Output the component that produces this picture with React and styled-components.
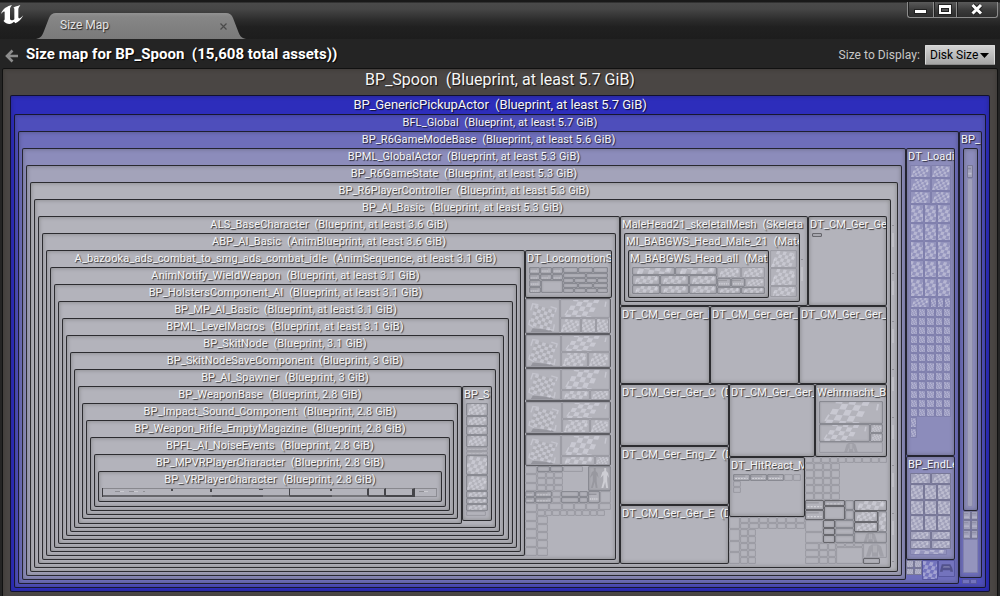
import React from "react";
import styled, { createGlobalStyle, css } from "styled-components";

const GlobalStyle = createGlobalStyle`
  *, *::before, *::after { box-sizing: border-box; }
  html, body { margin: 0; padding: 0; overflow: hidden; background: #242424; }
  body { font-family: Roboto, "Liberation Sans", sans-serif; color: #f0f0f0; }
`;

const tones = {
  root: "#4a4644",
  blue1: "#2d2dbb",
  blue2: "#4e4ebb",
  blue3: "#6e6ebb",
  blue4: "#8c8cbb",
  blue5: "#a3a3ba",
  grey: "#b3b3bb",
};

/* ---------- window chrome ---------- */

const Window = styled.div`
  width: 1000px;
  height: 596px;
  overflow: hidden;
  display: flex;
  flex-direction: column;
  background: #242424;
`;

const TitleBar = styled.header`
  flex: none;
  height: 39px;
  display: flex;
  align-items: flex-start;
  background: linear-gradient(#191919 0, #191919 2px, #4a4a4a 3px, #464646 9px, #2c2c2c 20px, #202020 27px, #1d1d1d 39px);
`;

const Logo = styled.svg`
  flex: none;
  width: 24px;
  height: 26px;
  fill: #fff;
`;

const Tab = styled.div`
  position: relative;
  width: 211px;
  height: 26px;
  margin: 13px 0 0 12px;
  padding: 0 20px 0 24px;
  display: flex;
  align-items: center;
  justify-content: space-between;
  font-size: 12px;
  line-height: 24px;
  color: #e4e4e4;
  text-shadow: 1px 1px 1px #222;
`;

const TabShape = styled.svg`
  position: absolute;
  inset: 0;
  width: 211px;
  height: 26px;
`;

const TabText = styled.span`
  position: relative;
  top: -1px;
`;

const TabClose = styled.svg`
  position: relative;
  width: 7px;
  height: 7px;
  stroke: #4a4a4a;
  stroke-width: 1.2;
`;

const WindowButtons = styled.div`
  margin: 2px 2px 0 auto;
  display: flex;
  height: 16px;
`;

const WindowButton = styled.div`
  width: ${(p) => p.$w}px;
  border: 1px solid #8c8c8c;
  border-top: 0;
  border-right-width: ${(p) => (p.$last ? 1 : 0)}px;
  border-radius: 0 0 ${(p) => (p.$last ? 3 : 0)}px ${(p) => (p.$first ? 3 : 0)}px;
  background: linear-gradient(#5a5a5a, #3a3a3a 55%, #2e2e2e);
  box-shadow: inset 1px 0 0 #222;
  display: flex;
  justify-content: center;
`;

const Toolbar = styled.div`
  flex: none;
  height: 29px;
  padding: 0 5px 0 5px;
  display: flex;
  align-items: center;
  background: #242424;
`;

const BackArrow = styled.svg`
  flex: none;
  width: 14px;
  height: 14px;
  margin-top: 4px;
  stroke: #8d8d8d;
  stroke-width: 2.6;
  fill: none;
`;

const Heading = styled.h1`
  margin: 1px 0 0 7px;
  font-size: 15px;
  font-weight: 700;
  line-height: 20px;
  letter-spacing: 0.03px;
  white-space: pre;
  color: #fff;
  text-shadow: 1px 1px 1px #000;
`;

const DisplayLabel = styled.span`
  margin: 3px 5px 0 auto;
  font-size: 12px;
  letter-spacing: 0.06px;
  color: #c8c8c8;
`;

const Combo = styled.button`
  width: 70px;
  height: 20px;
  margin-top: 3px;
  padding: 0 5px 0 4px;
  display: flex;
  align-items: center;
  justify-content: space-between;
  border: 1px solid #d9d9d9;
  border-bottom-color: #8a8a8a;
  border-radius: 1px;
  background: linear-gradient(#d2d2d2, #a6a6a6);
  font: 12px Roboto, "Liberation Sans", sans-serif;
  white-space: nowrap;
  color: #000;
`;

const Caret = styled.svg`
  flex: none;
  width: 9px;
  height: 5px;
  fill: #000;
`;

/* ---------- treemap frames ---------- */

const FrameBox = styled.section`
  flex: none;
  min-width: 0;
  width: ${(p) => (p.$w ? `${p.$w}px` : "auto")};
  height: ${(p) => (p.$h ? `${p.$h}px` : "auto")};
  ${(p) => p.$fill && css`flex: 1 1 0; min-height: 0;`}
  display: flex;
  flex-direction: column;
  padding: 0 ${(p) => p.$pr ?? 3}px ${(p) => p.$pb ?? 3}px 3px;
  border: 1px solid rgba(10, 10, 14, 0.8);
  border-radius: 2px;
  background: ${(p) => tones[p.$tone]};
  box-shadow: inset 0 0 4px rgba(20, 24, 10, 0.3);
`;

const RootBox = styled(FrameBox)`
  height: 532px;
  margin: 0 2px;
  padding: 0 7px 8px 7px;
  border-color: #111;
`;

const Title = styled.div`
  flex: none;
  height: ${(p) => p.$strip || 16}px;
  margin: 0 -3px;
  padding: 0 1px;
  overflow: hidden;
  white-space: pre;
  text-align: ${(p) => (p.$clip ? "left" : "center")};
  font-size: ${(p) => p.$size || 11}px;
  line-height: ${(p) => p.$line || p.$strip || 16}px;
  letter-spacing: ${(p) => p.$track ?? 0.11}px;
  color: #f6f6f6;
  text-shadow: 1px 1px 1px rgba(0, 0, 0, 0.75);
`;

const Body = styled.div`
  flex: 1;
  min-height: 0;
  min-width: 0;
  display: flex;
  flex-direction: ${(p) => (p.$col ? "column" : "row")};
  align-items: ${(p) => (p.$start ? "flex-start" : "stretch")};
`;

function Frame({ title, clip, tone = "grey", w, h, fill, pr, pb, strip, size, track, col, start, children }) {
  return (
    <FrameBox $tone={tone} $w={w} $h={h} $fill={fill} $pr={pr} $pb={pb}>
      {title && (
        <Title $clip={clip} $strip={strip} $size={size} $track={track}>{title}</Title>
      )}
      {children && <Body $col={col} $start={start}>{children}</Body>}
    </FrameBox>
  );
}

/* ---------- small cells ---------- */

const Stack = styled.div`
  flex: none;
  display: flex;
  flex-direction: ${(p) => (p.$row ? "row" : "column")};
  width: ${(p) => (p.$w ? `${p.$w}px` : "auto")};
  height: ${(p) => (p.$h ? `${p.$h}px` : "auto")};
  margin: ${(p) => p.$m || "0"};
  min-width: 0;
  ${(p) => p.$fill && css`flex: 1 1 0; min-height: 0;`}
`;

const Mesh = styled.div`
  flex: none;
  display: grid;
  grid-template-columns: repeat(${(p) => p.$cols}, minmax(0, 1fr));
  grid-template-rows: repeat(${(p) => p.$rows}, minmax(0, 1fr));
  width: ${(p) => (p.$w ? `${p.$w}px` : "auto")};
  height: ${(p) => p.$h}px;
`;

const cellLooks = {
  plain: css`
    border-color: rgba(70, 72, 80, 0.2);
    box-shadow: inset 0 0 1px rgba(60, 60, 70, 0.2);
  `,
  dark: css`
    border-color: rgba(50, 52, 58, 0.32);
    box-shadow: inset 0 0 2px rgba(50, 50, 60, 0.25);
  `,
  strong: css`
    border-color: rgba(30, 30, 34, 0.5);
    box-shadow: inset 0 0 2px rgba(50, 50, 60, 0.25);
  `,
  violet: css`
    border-color: rgba(100, 100, 150, 0.42);
    background: #9494bd;
  `,
  dusk: css`
    border-color: rgba(80, 80, 115, 0.5);
    background: #a0a0ba;
  `,
  indigo: css`
    border-color: rgba(60, 60, 130, 0.5);
    background: #7373bd;
  `,
};

const Cell = styled.div`
  flex: ${(p) => (p.$w || p.$h ? "none" : "1 1 0")};
  width: ${(p) => (p.$w ? `${p.$w}px` : "auto")};
  height: ${(p) => (p.$h ? `${p.$h}px` : "auto")};
  min-width: 0;
  min-height: 0;
  overflow: hidden;
  display: flex;
  border: 1px solid;
  border-radius: 1px;
  ${(p) => cellLooks[p.$look || "plain"]}
`;

const Art = styled.svg`
  flex: 1;
  width: 100%;
  height: 100%;
  min-width: 0;
  display: block;
`;

function squares(cols, rows, size) {
  const out = [];
  for (let r = 0; r < rows; r++)
    for (let c = 0; c < cols; c++)
      if ((r + c) % 2 === 0) out.push(<rect key={`${r}-${c}`} x={c * size} y={r * size} width={size} height={size} />);
  return out;
}

/* Material board turned a little, with corner brackets and a floor shadow */
function TurnedArt() {
  return (
    <Art viewBox="0 0 34 34" preserveAspectRatio="none">
      <path d="M4 34 L6 30 L25 32 L27 34Z" fill="rgba(60,60,66,.25)" />
      <rect x="9" y="5" width="21" height="21" transform="rotate(17 9 5)" fill="rgba(80,80,88,.07)" />
      <g fill="rgba(232,232,242,.42)" transform="translate(9 5) rotate(17)">{squares(6, 6, 3.7)}</g>
      <g fill="none" stroke="rgba(232,232,242,.34)" strokeWidth="1.5">
        <path d="M4 11 L6 4 L12 5" />
        <path d="M25 7 L31 9 L30 13" />
        <path d="M3 21 L2 26 L7 29" />
        <path d="M22 31 L28 32 L29 26" />
      </g>
    </Art>
  );
}

/* Wide board seen at a slant */
function WideArt() {
  return (
    <Art viewBox="0 0 48 20" preserveAspectRatio="none">
      <g fill="rgba(232,232,242,.42)" transform="translate(14 -4) skewX(-17) rotate(6)">{squares(5, 5, 5.2)}</g>
      <path d="M4 18 L7 12 M44 8 L45 2" stroke="rgba(232,232,242,.4)" strokeWidth="1.4" />
    </Art>
  );
}

/* Small board that fills its cell */
function SlantArt() {
  return (
    <Art viewBox="0 0 18 12" preserveAspectRatio="xMidYMid slice">
      <g fill="rgba(232,232,242,.4)" transform="translate(4.5 0) skewX(-14) rotate(8)">{squares(6, 5, 2.4)}</g>
      <path d="M1.5 10 L2.5 6 M15.5 6 L16.5 2" stroke="rgba(232,232,242,.35)" strokeWidth=".9" />
    </Art>
  );
}

function DotsArt() {
  return (
    <Art viewBox="0 0 12 6" preserveAspectRatio="none">
      <path d="M1 4.2 H11" stroke="rgba(245,245,250,.5)" strokeWidth="1" strokeDasharray="1.4 .9" />
      <path d="M0 1.4 H9" stroke="rgba(60,60,66,.25)" strokeWidth=".8" />
    </Art>
  );
}

function FigureArt() {
  const body = "M5 1 L7 1 L7 4 L9 6 L10 11 L8 8 L8 14 L9 21 L7 21 L6 15 L4 21 L2 21 L4 14 L4 8 L1 11 L3 5 L5 4Z";
  return (
    <Art viewBox="0 0 22 23" preserveAspectRatio="none">
      <rect width="22" height="23" fill="rgba(60,60,66,.08)" />
      <path d={body} fill="rgba(60,60,66,.16)" />
      <path d={body} fill="rgba(235,235,240,.55)" transform="translate(11 0)" />
    </Art>
  );
}

function TorsoArt() {
  return (
    <Art viewBox="0 0 22 12" preserveAspectRatio="xMidYMid meet">
      <path d="M8 0 H14 L17 2 L20 12 H16 L14 6 V12 H8 V6 L6 12 H2 L5 2Z" fill="rgba(60,60,66,.15)" />
      <path d="M10 1 V8 M12 1 V8" stroke="rgba(235,235,240,.35)" strokeWidth="1" />
    </Art>
  );
}

function CarArt() {
  return (
    <Art viewBox="0 0 16 18" preserveAspectRatio="none">
      <path d="M3 4 H12 L14 8 L15 13 H12 V11 H4 V13 H1 L2 8Z" fill="rgba(30,30,60,.38)" />
      <path d="M5 6 H11 L12 8 H4Z" fill="rgba(160,160,200,.5)" />
    </Art>
  );
}

const arts = {
  slant: <SlantArt />,
  wide: <WideArt />,
  turned: <TurnedArt />,
  dots: <DotsArt />,
  figure: <FigureArt />,
  torso: <TorsoArt />,
  car: <CarArt />,
};

const Thumb = ({ art, look, w, h }) => (
  <Cell $look={look} $w={w} $h={h}>{art && arts[art]}</Cell>
);

function Grid({ cols = 1, rows = 1, w, h, art, look }) {
  return (
    <Mesh $cols={cols} $rows={rows} $w={w} $h={h}>
      {Array.from({ length: cols * rows }, (_, i) => (
        <Thumb key={i} art={art} look={look} />
      ))}
    </Mesh>
  );
}

/* One texture set: a large board on the left, a wide one over a row of small ones */
const SetBox = styled.div`
  flex: none;
  height: ${(p) => p.$h}px;
  width: 86px;
  display: flex;
  border: 1px solid rgba(35, 35, 40, 0.6);
  border-radius: 2px;
`;

function TextureSet({ h, left, top, parts }) {
  return (
    <SetBox $h={h}>
      <Thumb art="turned" w={left} />
      <Stack $fill>
        <Thumb art="wide" h={top} />
        <Stack $row $fill>
          {parts.map((w, i) => (
            <Thumb key={i} art="slant" w={w} />
          ))}
        </Stack>
      </Stack>
    </SetBox>
  );
}

/* Squashed children of the innermost frame */
const Sliver = styled.div`
  height: 9px;
  width: 335px;
  display: flex;
  border-left: 1px solid #3c3c40;
`;

const SliverPart = styled.div`
  width: ${(p) => p.$w}px;
  height: 9px;
  border: 0 solid ${(p) => p.$c || "#45454a"};
  border-top: 1px solid #88888e;
  border-right-width: ${(p) => p.$r || 0}px;
  border-bottom: ${(p) => p.$b || 2}px solid ${(p) => p.$line || "#66666b"};
`;

const Tick = styled.div`
  width: ${(p) => p.$w || 2}px;
  height: ${(p) => p.$h || 2}px;
  margin: 0 0 0 auto;
  background: #4c4c51;
`;

const Speckle = styled.div`
  width: ${(p) => p.$w}px;
  height: 1px;
  margin: 2px 0 0 ${(p) => p.$x}px;
  background: repeating-linear-gradient(90deg, #8f8f95 0 5px, #cacad0 5px 9px, transparent 9px 14px);
`;

const EdgeStrip = styled.div`
  width: 2px;
  margin-left: 1px;
  background: repeating-linear-gradient(transparent 0 26px, rgba(60, 60, 66, 0.3) 26px 27px, transparent 27px 34px, rgba(230, 230, 235, 0.25) 34px 48px);
`;

const LongStrip = styled.div`
  flex: 1;
  margin: 0 1px 0 0;
  border: 1px solid rgba(100, 100, 150, 0.35);
  border-radius: 2px;
  background: #a0a0ba;
`;

/* ---------- map sections ---------- */

const bp = (name, size) => `${name}  (Blueprint, ${size})`;

function WeaponTree() {
  return (
    <>
      <Frame title={bp("BP_WeaponBase", "2.8 GiB")} w={384} h={138} pb={4}>
        <Frame title={bp("BP_Impact_Sound_Component", "2.8 GiB")} fill>
          <Frame title={bp("BP_Weapon_Rifle_EmptyMagazine", "2.8 GiB")} fill>
            <Frame title={bp("BPFL_AI_NoiseEvents", "2.8 GiB")} fill>
              <Frame title={bp("BP_MPVRPlayerCharacter", "2.8 GiB")} fill pb={4}>
                <Frame title={bp("BP_VRPlayerCharacter", "2.8 GiB")} fill>
                  <Sliver>
                    <SliverPart $w={54}><Speckle $x={12} $w={30} /></SliverPart>
                    <SliverPart $w={16}><Tick /></SliverPart>
                    <SliverPart $w={39}><Tick $h={3} /></SliverPart>
                    <SliverPart $w={51} $line="#55555a"><Tick $w={4} $h={1} /></SliverPart>
                    <SliverPart $w={27} $r={1} $line="#77777c" />
                    <SliverPart $w={42} $line="#55555a"><Tick /></SliverPart>
                    <SliverPart $w={37} $r={2} $line="#77777c" />
                    <SliverPart $w={17} $r={2} $line="#55555a" />
                    <SliverPart $w={29} $r={3} $line="#45454a" />
                    <SliverPart $w={22} $r={1} $b={1} $line="#8d8d94" $c="#8d8d94"><Speckle $x={4} $w={14} /></SliverPart>
                  </Sliver>
                </Frame>
              </Frame>
            </Frame>
          </Frame>
        </Frame>
      </Frame>
      <Frame title="BP_S" clip w={30} h={135} col>
        <Grid h={13} art="slant" look="dark" />
        <Grid h={19} rows={2} art="slant" look="dark" />
        <Grid h={12} art="slant" look="dark" />
        <Grid h={8} rows={2} art="dots" />
        <Grid h={20} art="slant" look="dark" />
        <Grid h={16} art="slant" look="dark" />
        <Grid h={20} rows={3} art="slant" look="dark" />
        <Grid h={5} w={20} />
      </Frame>
    </>
  );
}

function AnimColumn() {
  return (
    <Stack $w={87}>
      <Frame title="DT_LocomotionS" clip h={48}>
        <Stack $w={34}>
          <Grid cols={3} rows={2} h={13} art="dots" look="dark" w={34} />
          <Stack $row $h={13}>
            <Grid rows={2} h={13} w={12} art="dots" look="dark" />
            <Thumb look="dark" w={22} />
          </Stack>
        </Stack>
        <Stack $w={45}>
          <Grid cols={3} h={6} look="dark" />
          <Grid cols={2} h={5} look="dark" />
          <Grid cols={4} h={5} look="dark" />
          <Grid cols={3} h={5} look="dark" />
          <Grid cols={4} h={5} look="dark" />
        </Stack>
      </Frame>
      <TextureSet h={36} left={34} top={19} parts={[21, 15, 13]} />
      <TextureSet h={34} left={35} top={17} parts={[27, 22]} />
      <TextureSet h={33} left={35} top={21} parts={[29, 20]} />
      <TextureSet h={33} left={36} top={17} parts={[28, 20]} />
      <TextureSet h={32} left={35} top={21} parts={[34, 15]} />
      <Stack $row $h={25} $w={86}>
        <Grid rows={3} h={25} w={12} />
        <Stack $w={26}>
          <Grid cols={2} h={6} look="dark" />
          <Grid cols={3} rows={3} h={19} />
        </Stack>
        <Stack $w={25}><Thumb w={20} h={6} /></Stack>
        <Thumb art="figure" look="dark" w={23} />
      </Stack>
      <Stack $row $h={12} $w={86}>
        <Grid rows={2} h={12} w={10} art="dots" look="dark" />
        <Grid rows={2} h={12} w={17} art="dots" look="dark" />
        <Grid rows={2} h={12} w={9} />
        <Grid rows={2} h={12} w={18} look="dark" />
        <Grid rows={2} h={12} w={9} look="dark" />
        <Grid rows={1} h={12} w={12} art="dots" look="dark" />
        <Thumb w={11} />
      </Stack>
      <Stack $row $h={53}>
        <Grid rows={6} h={53} w={12} />
        <Stack>
          <Grid cols={6} h={7} w={74} />
          <Grid cols={9} h={6} w={68} />
          <Grid rows={5} h={40} w={11} />
        </Stack>
      </Stack>
    </Stack>
  );
}

function CharacterTree() {
  return (
    <Frame title={bp("ALS_BaseCharacter", "at least 3.6 GiB")} w={582}>
      <Frame title={"ABP_AI_Basic  (AnimBlueprint, at least 3.6 GiB)"} fill>
        <Frame title={"A_bazooka_ads_combat_to_smg_ads_combat_idle  (AnimSequence, at least 3.1 GiB)"} w={479}>
          <Frame title={bp("AnimNotify_WieldWeapon", "at least 3.1 GiB")} fill>
            <Frame title={bp("BP_HolstersComponent_AI", "at least 3.1 GiB")} fill>
              <Frame title={bp("BP_MP_AI_Basic", "at least 3.1 GiB")} fill>
                <Frame title={bp("BPML_LevelMacros", "at least 3.1 GiB")} fill pr={4}>
                  <Frame title={bp("BP_SkitNode", "3.1 GiB")} fill>
                    <Frame title={bp("BP_SkitNodeSaveComponent", "3 GiB")} fill>
                      <Frame title={bp("BP_AI_Spawner", "3 GiB")} fill start>
                        <WeaponTree />
                      </Frame>
                    </Frame>
                  </Frame>
                </Frame>
              </Frame>
            </Frame>
          </Frame>
        </Frame>
        <AnimColumn />
      </Frame>
    </Frame>
  );
}

function HeadRow() {
  return (
    <Stack $row $h={90}>
      <Frame title="MaleHead21_skeletalMesh  (Skeleta" clip w={188}>
        <Frame title="MI_BABGWS_Head_Male_21  (Mate" clip w={176} start>
          <Frame title="M_BABGWS_Head_all  (Mat" clip w={141} h={48}>
            <Stack $w={85}>
              <Grid cols={2} h={8} art="slant" look="dark" />
              <Grid cols={3} rows={2} h={19} art="slant" look="dark" />
            </Stack>
            <Stack $w={48}>
              <Grid cols={2} h={11} art="slant" />
              <Stack $row $h={9}>
                <Grid cols={2} h={9} w={28} art="dots" look="dark" />
                <Thumb art="slant" w={20} />
              </Stack>
              <Grid cols={2} h={7} art="slant" look="dark" />
            </Stack>
          </Frame>
          <Stack $w={27} $m="0 0 0 1px">
            <Grid h={18} art="slant" />
            <Grid h={18} art="slant" />
            <Grid h={11} art="slant" />
          </Stack>
        </Frame>
        <EdgeStrip />
      </Frame>
      <Frame title="DT_CM_Ger_Ge" clip w={79} start>
        <Thumb look="strong" w={10} h={4} />
      </Frame>
    </Stack>
  );
}

function TableArea() {
  return (
    <Stack $w={267}>
      <HeadRow />
      <Stack $row $h={78}>
        <Frame title="DT_CM_Ger_Ger_E" clip w={90} />
        <Frame title="DT_CM_Ger_Ger_E" clip w={89} />
        <Frame title="DT_CM_Ger_Ger_E" clip w={88} />
      </Stack>
      <Stack $row $h={180}>
        <Stack $w={109}>
          <Frame title="DT_CM_Ger_Ger_C  (D" clip h={62} />
          <Frame title="DT_CM_Ger_Eng_Z  (D" clip h={59} />
          <Frame title="DT_CM_Ger_Ger_E  (D" clip h={59} />
        </Stack>
        <Stack $w={158}>
          <Stack $row $h={73}>
            <Frame title="DT_CM_Ger_Ger_E" clip w={86} />
            <Frame title="Wehrmacht_B" clip w={72} col>
              <Grid h={23} art="wide" look="dark" />
              <Stack $row $h={18}>
                <Thumb art="wide" look="dark" w={51} />
                <Grid rows={2} h={18} w={13} art="slant" look="dark" />
              </Stack>
              <Grid h={11} art="torso" />
            </Frame>
          </Stack>
          <Stack $row $h={107}>
            <Stack $w={76}>
              <Frame title="DT_HitReact_M" clip h={60} col>
                <Stack $row>
                  <Grid cols={3} h={7} w={51} art="dots" look="dark" />
                  <Grid cols={2} h={7} w={17} />
                </Stack>
                <Grid rows={2} h={12} w={8} />
              </Frame>
              <Stack $row>
                <Grid rows={4} h={47} w={11} />
                <Stack>
                  <Grid cols={7} rows={2} h={12} w={65} />
                  <Grid cols={2} rows={5} h={35} w={16} />
                </Stack>
              </Stack>
            </Stack>
            <Stack $w={82}>
              <Grid cols={10} h={6} />
              <Grid cols={4} rows={5} h={37} w={35} />
              <Stack $row $h={43}>
                <Stack $w={49}>
                  <Stack $row $h={20}>
                    <Grid rows={2} h={20} w={19} art="dots" look="strong" />
                    <Stack $w={21}>
                      <Thumb art="dots" look="strong" h={6} />
                      <Thumb look="strong" h={14} />
                    </Stack>
                    <Grid rows={2} h={20} w={9} look="dark" />
                  </Stack>
                  <Stack $row $h={23}>
                    <Grid rows={2} h={23} w={18} />
                    <Grid rows={3} h={23} w={12} look="strong" />
                    <Grid rows={3} h={23} w={19} look="dark" />
                  </Stack>
                </Stack>
                <Stack $w={33}>
                  <Grid h={11} art="slant" look="strong" />
                  <Stack $row $h={21}>
                    <Grid rows={2} h={21} w={24} art="slant" look="strong" />
                    <Thumb art="slant" look="dark" w={9} />
                  </Stack>
                  <Grid h={11} art="torso" look="dark" />
                </Stack>
              </Stack>
              <Stack $row $h={21}>
                <Grid rows={3} h={21} w={14} />
                <Grid cols={2} rows={3} h={21} w={17} />
                <Stack $w={27}>
                  <Grid cols={3} h={4} />
                  <Thumb />
                </Stack>
                <Stack $w={24}>
                  <Grid h={15} art="torso" />
                  <Grid h={6} w={17} look="strong" />
                </Stack>
              </Stack>
            </Stack>
          </Stack>
        </Stack>
      </Stack>
    </Stack>
  );
}

function LoadingColumn() {
  return (
    <Stack $w={49}>
      <Frame title="DT_Loading" clip tone="blue4" h={308} col>
        <Grid cols={2} rows={3} h={39} art="slant" look="violet" />
        <Grid cols={3} rows={5} h={93} art="slant" look="violet" />
        <Stack $row $h={11}>
          <Thumb art="slant" look="violet" w={20} />
          <Grid cols={3} h={11} w={21} art="slant" look="violet" />
        </Stack>
        <Grid cols={5} rows={12} h={109} art="slant" look="violet" />
        <Grid rows={2} h={21} w={7} art="slant" look="violet" />
      </Frame>
      <Frame title="BP_EndLevel" clip tone="blue4" h={104} col>
        <Grid cols={2} h={11} art="slant" look="dusk" />
        <Grid cols={3} rows={3} h={47} art="slant" look="dusk" />
        <Grid cols={2} rows={2} h={18} art="slant" look="dusk" />
        <Grid h={6} w={37} art="slant" look="violet" />
      </Frame>
      <Stack $row $h={20}>
        <Grid cols={2} rows={2} h={15} w={16} art="slant" look="dusk" />
        <Grid h={20} w={16} art="slant" look="indigo" />
        <Grid h={17} w={17} art="car" look="indigo" />
      </Stack>
    </Stack>
  );
}

function SideColumn() {
  return (
    <Stack $w={23}>
      <Frame title="BP_" clip tone="blue3" h={447} col>
        <Frame tone="blue4" h={363} title=" " col>
          <Grid h={13} w={6} art="dots" look="dusk" />
          <LongStrip />
        </Frame>
        <Grid cols={2} rows={3} h={28} art="dots" look="dusk" />
        <Grid h={34} look="violet" />
      </Frame>
      <Stack $m="1px 0 0 3px">
        <Grid cols={2} h={5} w={15} look="indigo" />
      </Stack>
    </Stack>
  );
}

export default function App() {
  return (
    <>
      <GlobalStyle />
      <Window>
        <TitleBar>
          <Logo viewBox="0 0 72 78">
            <path d="M36 15 C22 18 8 26 3 42 C8 36 12 33 14 36 V56 C14 60 12 62 10 62 C18 72 28 74 36 70 L42 65 L46 70 C56 66 64 58 70 46 C64 52 60 56 57 55 C55 54 55 52 55 49 V28 C55 24 58 20 61 15 C52 19 46 18 40 23 C43 24 43 26 43 29 V58 C40 61 36 62 33 60 C30 59 30 56 30 53 V27 C30 23 33 19 36 15Z" />
          </Logo>
          <Tab>
            <TabShape viewBox="0 0 211 26">
              <defs>
                <linearGradient id="tabFill" x1="0" y1="0" x2="0" y2="1">
                  <stop offset="0" stopColor="#929292" />
                  <stop offset="0.15" stopColor="#868686" />
                  <stop offset="1" stopColor="#7a7a7a" />
                </linearGradient>
              </defs>
              <path d="M0 26 C5 25 6 23 8 18 L13 5 Q15 0 20 0 H190 Q195 0 197 5 L202 18 C204 23 205 25 210 26Z" fill="url(#tabFill)" />
            </TabShape>
            <TabText>Size Map</TabText>
            <TabClose viewBox="0 0 7 7">
              <path d="M0.5 0.5 L6.5 6.5 M6.5 0.5 L0.5 6.5" />
            </TabClose>
          </Tab>
          <WindowButtons>
            <WindowButton $w={26} $first>
              <svg width="14" height="15" viewBox="0 0 14 15">
                <rect x="0.5" y="7.5" width="12" height="4" fill="#fff" stroke="#222" />
              </svg>
            </WindowButton>
            <WindowButton $w={23}>
              <svg width="14" height="15" viewBox="0 0 14 15">
                <rect x="0.5" y="2.5" width="13" height="10" fill="#fff" stroke="#222" />
                <rect x="3.5" y="6.5" width="7" height="3" fill="#555" stroke="#222" />
              </svg>
            </WindowButton>
            <WindowButton $w={42} $last>
              <svg width="14" height="15" viewBox="0 0 14 15">
                <path d="M2.5 3 L11 11.5 M11 3 L2.5 11.5" stroke="#222" strokeWidth="5" />
                <path d="M2.5 3 L11 11.5 M11 3 L2.5 11.5" stroke="#fff" strokeWidth="3" />
              </svg>
            </WindowButton>
          </WindowButtons>
        </TitleBar>

        <Toolbar>
          <BackArrow viewBox="0 0 14 14">
            <path d="M7.5 1.5 L2 7 L7.5 12.5 M2 7 H13" />
          </BackArrow>
          <Heading>{"Size map for BP_Spoon  (15,608 total assets))"}</Heading>
          <DisplayLabel>Size to Display:</DisplayLabel>
          <Combo>
            Disk Size
            <Caret viewBox="0 0 9 5">
              <path d="M0 0 H9 L4.5 5Z" />
            </Caret>
          </Combo>
        </Toolbar>

        <RootBox $tone="root">
          <Title $size={16} $strip={26} $line={22} $track={0}>{bp("BP_Spoon", "at least 5.7 GiB")}</Title>
          <Frame tone="blue1" title={bp("BP_GenericPickupActor", "at least 5.7 GiB")} h={497} strip={18} size={13} track={-0.07}>
            <Frame tone="blue2" title={bp("BFL_Global", "at least 5.7 GiB")} fill>
              <Frame tone="blue3" title={bp("BP_R6GameModeBase", "at least 5.6 GiB")} w={941}>
                <Frame tone="blue4" title={bp("BPML_GlobalActor", "at least 5.3 GiB")} w={884}>
                  <Frame tone="blue5" title={bp("BP_R6GameState", "at least 5.3 GiB")} fill>
                    <Frame title={bp("BP_R6PlayerController", "at least 5.3 GiB")} fill>
                      <Frame title={bp("BP_AI_Basic", "at least 5.3 GiB")} w={857}>
                        <CharacterTree />
                        <TableArea />
                      </Frame>
                      <EdgeStrip />
                    </Frame>
                  </Frame>
                </Frame>
                <LoadingColumn />
              </Frame>
              <SideColumn />
            </Frame>
          </Frame>
        </RootBox>
      </Window>
    </>
  );
}
